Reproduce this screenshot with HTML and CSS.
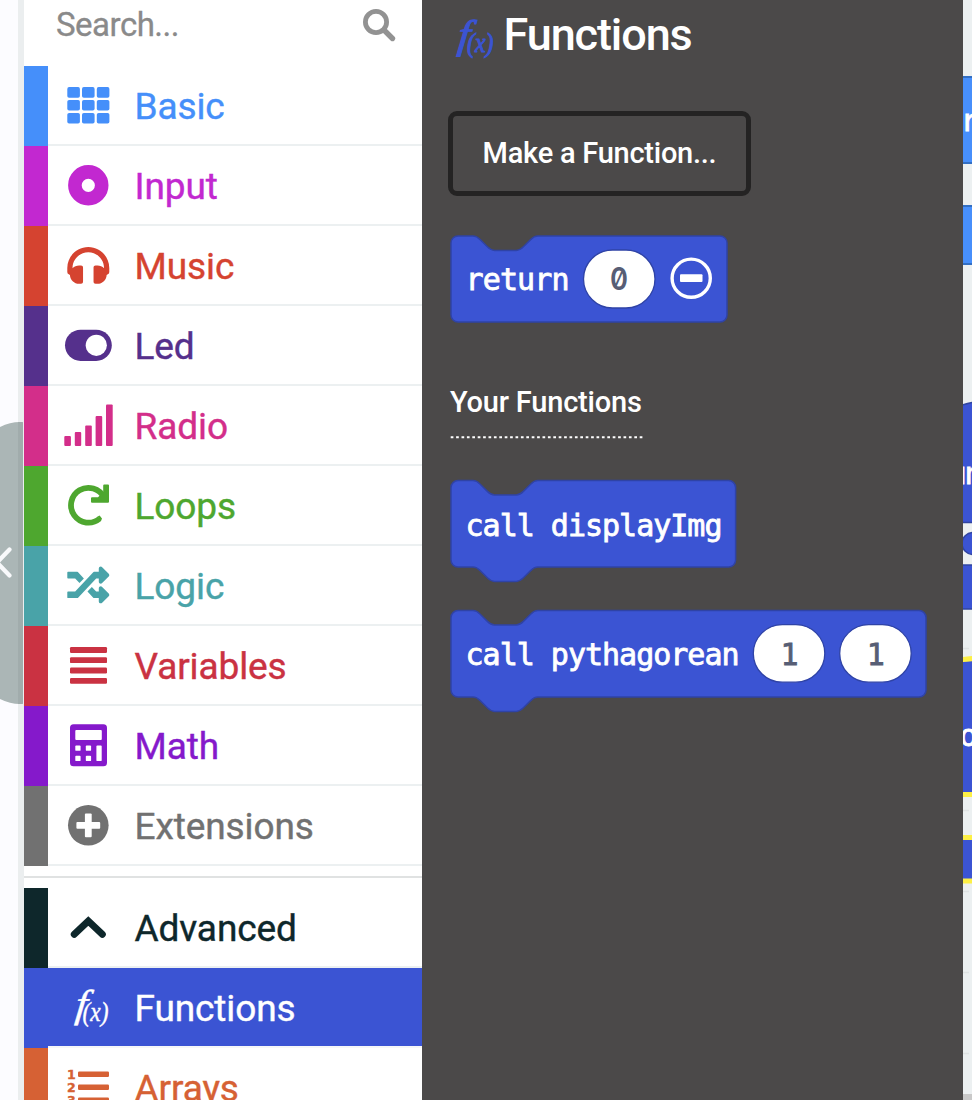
FILE: index.html
```html
<!DOCTYPE html>
<html lang="en">
<head>
<meta charset="utf-8">
<title>Functions</title>
<link rel="stylesheet" href="styles.css">
</head>
<body>
<div class="editor">
  <aside class="simulator">
    <svg class="collapse" width="24" height="284" viewBox="0 421 24 284"><path class="tab" d="M0 427Q10 422 20 422H22Q23 422 23 423V703Q23 704 22 704H20Q10 704 0 699Z"/><path class="tab-edge" d="M18 422H22Q23 422 23 423V703Q23 704 22 704H18Z"/><path class="tab-arrow" d="M9.5 549.5L-3 562.5L9.5 575.5"/></svg>
  </aside>
  <nav class="toolbox">
    <div class="search"><span>Search...</span>
      <svg width="34" height="34" viewBox="362 8 34 34"><circle cx="376" cy="22" r="10.6" fill="none" stroke="currentColor" stroke-width="4.8"/><path d="M384 30L392.5 38.5" stroke="currentColor" stroke-width="5.4" stroke-linecap="round"/></svg>
    </div>
    <div class="row basic"><svg class="icon" viewBox="64 15 48 48"><g><rect x="67.3" y="21.1" width="12.6" height="10.6" rx="1.8"/><rect x="82" y="21.1" width="12.6" height="10.6" rx="1.8"/><rect x="96.8" y="21.1" width="12.6" height="10.6" rx="1.8"/><rect x="67.3" y="34" width="12.6" height="10.6" rx="1.8"/><rect x="82" y="34" width="12.6" height="10.6" rx="1.8"/><rect x="96.8" y="34" width="12.6" height="10.6" rx="1.8"/><rect x="67.3" y="47" width="12.6" height="10.6" rx="1.8"/><rect x="82" y="47" width="12.6" height="10.6" rx="1.8"/><rect x="96.8" y="47" width="12.6" height="10.6" rx="1.8"/></g></svg><span>Basic</span></div>
    <div class="row input"><svg class="icon" viewBox="64 15 48 48"><circle cx="88.3" cy="39.3" r="13.4" fill="none" stroke="currentColor" stroke-width="13.6"/></svg><span>Input</span></div>
    <div class="row music"><svg class="icon" viewBox="64 15 48 48"><path transform="translate(67.3 18.4) scale(.082)" d="M256 32C114.52 32 0 146.497 0 288v48a32 32 0 0 0 17.689 28.622l14.383 7.191C34.083 431.903 83.421 480 144 480h24c13.255 0 24-10.745 24-24V280c0-13.255-10.745-24-24-24h-24c-31.342 0-59.671 12.879-80 33.627V288c0-105.869 86.131-192 192-192s192 86.131 192 192v1.627C427.671 268.879 399.342 256 368 256h-24c-13.255 0-24 10.745-24 24v176c0 13.255 10.745 24 24 24h24c60.579 0 109.917-48.098 111.928-108.187l14.382-7.191A32 32 0 0 0 512 336v-48c0-141.479-114.497-256-256-256z"/></svg><span>Music</span></div>
    <div class="row led"><svg class="icon" viewBox="64 15 48 48"><rect x="65" y="23.7" width="46.8" height="31.2" rx="15.6"/><circle cx="96.3" cy="39.3" r="10.6" fill="#fff"/></svg><span>Led</span></div>
    <div class="row radio"><svg class="icon" viewBox="64 15 48 48"><rect x="64.3" y="50" width="6.6" height="10" rx="1"/><rect x="74.8" y="46" width="6.4" height="14" rx="1"/><rect x="85.2" y="39.4" width="6.6" height="20.6" rx="1"/><rect x="95.6" y="30" width="6.6" height="30" rx="1"/><rect x="106" y="18.4" width="6.7" height="41.6" rx="1"/></svg><span>Radio</span></div>
    <div class="row loops"><svg class="icon" viewBox="64 15 48 48"><path d="M104 31.5A17.4 17.4 0 1 0 99.6 52.6" fill="none" stroke="currentColor" stroke-width="5.8"/><path d="M103.2 19.4Q103.2 18.4 104.2 18.4H108Q109 18.4 109 19.4V35.7Q109 36.7 108 36.7H92Q91 36.7 91 35.7V32.3Q91 31.3 92 31.3H98L103.2 26Z"/><path d="M97.6 50.6L99.6 49.5L102 52.5Q102 53.5 100.2 55Z"/></svg><span>Loops</span></div>
    <div class="row logic"><svg class="icon" viewBox="64 15 48 48"><path transform="translate(67.3 18) scale(.082)" d="M504.971 359.029c9.373 9.373 9.373 24.569 0 33.941l-80 79.984c-15.01 15.01-40.971 4.49-40.971-16.971V416h-58.785a12.004 12.004 0 0 1-8.773-3.812l-70.556-75.596 53.333-57.143L352 336h32v-39.981c0-21.438 25.943-31.998 40.971-16.971l80 79.981zM12 176h84l52.781 56.551 53.333-57.143-70.556-75.596A11.999 11.999 0 0 0 122.785 96H12c-6.627 0-12 5.373-12 12v56c0 6.627 5.373 12 12 12zm372 0v39.984c0 21.46 25.961 31.98 40.971 16.971l80-79.984c9.373-9.373 9.373-24.569 0-33.941l-80-79.981C409.943 24.021 384 34.582 384 56.019V96h-58.785a12.004 12.004 0 0 0-8.773 3.812L96 336H12c-6.627 0-12 5.373-12 12v56c0 6.627 5.373 12 12 12h110.785c3.326 0 6.503-1.381 8.773-3.812L352 176h32z"/></svg><span>Logic</span></div>
    <div class="row variables"><svg class="icon" viewBox="64 15 48 48"><rect x="70" y="21" width="37" height="5.9" rx="1.2"/><rect x="70" y="31.2" width="37" height="5.9" rx="1.2"/><rect x="70" y="41.6" width="37" height="5.9" rx="1.2"/><rect x="70" y="51.9" width="37" height="5.9" rx="1.2"/></svg><span>Variables</span></div>
    <div class="row math"><svg class="icon" viewBox="64 15 48 48"><rect x="70" y="18.2" width="37" height="42.1" rx="3.6"/><g fill="#fff"><rect x="75.3" y="24" width="26.5" height="10" rx=".9"/><rect x="75.3" y="39.5" width="5.3" height="5.3" rx=".9"/><rect x="85.8" y="39.5" width="5.3" height="5.3" rx=".9"/><rect x="75.3" y="49.8" width="5.3" height="5.3" rx=".9"/><rect x="85.8" y="49.8" width="5.3" height="5.3" rx=".9"/><rect x="96.4" y="39.5" width="5.3" height="15.6" rx=".9"/></g></svg><span>Math</span></div>
    <div class="row extensions"><svg class="icon" viewBox="64 15 48 48"><circle cx="88.3" cy="39.3" r="20.3"/><g fill="#fff"><rect x="76.4" y="35.9" width="23.8" height="6.8" rx="1"/><rect x="84.9" y="27.4" width="6.8" height="23.8" rx="1"/></g></svg><span>Extensions</span></div>
    <div class="divider"></div>
    <div class="row advanced"><svg class="icon" viewBox="64 15 48 48"><path d="M74.3 46.3L88.3 33L102.3 46.3" fill="none" stroke="currentColor" stroke-width="7" stroke-linecap="round"/></svg><span>Advanced</span></div>
    <div class="row functions selected"><svg class="icon fx" viewBox="64 15 48 48"><text transform="translate(74.5 48.8) skewX(-6) scale(1.1 1)" font-size="39">f</text><text x="82.5" y="53" font-size="27" textLength="26" lengthAdjust="spacingAndGlyphs">(x)</text></svg><span>Functions</span></div>
    <div class="row arrays"><svg class="icon" viewBox="64 15 48 48"><g class="digits"><text x="67" y="31.2">1</text><text x="67" y="44.3">2</text><text x="67" y="57.4">3</text></g><rect x="78" y="23.4" width="31" height="5.6" rx="1.2"/><rect x="78" y="36.4" width="31" height="5.6" rx="1.2"/><rect x="78" y="49.4" width="31" height="5.6" rx="1.2"/></svg><span>Arrays</span></div>
  </nav>
  <main class="flyout">
    <header class="heading"><svg class="fx" width="44" height="46" viewBox="450 15 44 46"><text transform="translate(457 47.5) skewX(-6) scale(1.1 1)" font-size="40">f</text><text x="467" y="52" font-size="27" textLength="26.5" lengthAdjust="spacingAndGlyphs">(x)</text></svg><h1>Functions</h1></header>
    <button class="make">Make a Function...</button>
    <svg class="block return" width="280" height="90" viewBox="449 234 280 90">
      <path class="shape" d="M458 236H473c3.6 0 5.4 1.8 7.2 3.6l7.2 7.2c1.8 1.8 3.6 3.6 7.2 3.6h21.6c3.6 0 5.4-1.8 7.2-3.6l7.2-7.2c1.8-1.8 3.6-3.6 7.2-3.6H720a7 7 0 0 1 7 7V315a7 7 0 0 1-7 7H458a7 7 0 0 1-7-7V243a7 7 0 0 1 7-7Z"/>
      <text class="code" x="465.5" y="290.3" textLength="104">return</text>
      <rect class="pill" x="583.5" y="250" width="71.5" height="58" rx="29"/>
      <text class="zero" transform="translate(619 290.3) scale(.88 1)" text-anchor="middle">0</text>
      <circle cx="691.2" cy="278.2" r="19.1" fill="none" stroke="#fff" stroke-width="3.4"/><rect x="680" y="274.2" width="22.5" height="7.8" rx="1" fill="#fff"/>
    </svg>
    <h2>Your Functions</h2>
    <svg class="dots" width="194" height="4" viewBox="450 435 194 4"><path d="M450.7 437.2H642.6" stroke="#fff" stroke-width="2" stroke-dasharray="2.7 2.7"/></svg>
    <svg class="block call" width="290" height="106" viewBox="449 479 290 106">
      <path class="shape" d="M458 480.6H473c3.6 0 5.4 1.8 7.2 3.6l7.2 7.2c1.8 1.8 3.6 3.6 7.2 3.6h21.6c3.6 0 5.4-1.8 7.2-3.6l7.2-7.2c1.8-1.8 3.6-3.6 7.2-3.6H728.6a7 7 0 0 1 7 7V560a7 7 0 0 1-7 7H537.8c-3.6 0-5.4 1.8-7.2 3.6l-7.2 7.2c-1.8 1.8-3.6 3.6-7.2 3.6h-21.6c-3.6 0-5.4-1.8-7.2-3.6l-7.2-7.2c-1.8-1.8-3.6-3.6-7.2-3.6H458a7 7 0 0 1-7-7V487.6a7 7 0 0 1 7-7Z"/>
      <text class="code" x="465.5" y="535.7" textLength="257">call displayImg</text>
    </svg>
    <svg class="block" width="480" height="106" viewBox="449 609 480 106">
      <path class="shape" d="M458 610.6H473c3.6 0 5.4 1.8 7.2 3.6l7.2 7.2c1.8 1.8 3.6 3.6 7.2 3.6h21.6c3.6 0 5.4-1.8 7.2-3.6l7.2-7.2c1.8-1.8 3.6-3.6 7.2-3.6H919a7 7 0 0 1 7 7V690a7 7 0 0 1-7 7H537.8c-3.6 0-5.4 1.8-7.2 3.6l-7.2 7.2c-1.8 1.8-3.6 3.6-7.2 3.6h-21.6c-3.6 0-5.4-1.8-7.2-3.6l-7.2-7.2c-1.8-1.8-3.6-3.6-7.2-3.6H458a7 7 0 0 1-7-7V617.6a7 7 0 0 1 7-7Z"/>
      <text class="code" x="465.5" y="665.3" textLength="274">call pythagorean</text>
      <rect class="pill" x="753.3" y="624.7" width="71.5" height="57.5" rx="29"/><rect class="pill" x="839.7" y="624.7" width="71.5" height="57.5" rx="29"/>
      <text class="code num" x="789.5" y="665.3" text-anchor="middle">1</text><text class="code num" x="875.7" y="665.3" text-anchor="middle">1</text>
    </svg>
  </main>
  <svg class="workspace" width="9" height="1100" viewBox="963 0 9 1100">
    <path d="M963 648.5h6M963 810.5h6M963 891.5h6M963 972.5h6M963 1053.5h6" stroke="#dfe3e4" stroke-width="1.5"/>
    <g fill="#478ffb" stroke="#326fc4" stroke-width="2"><rect x="950" y="77" width="40" height="86"/><rect x="950" y="206" width="40" height="58"/></g>
    <g fill="#3b54d3" stroke="#3045a0" stroke-width="1.5"><path d="M950 522.5V411Q960 404 980 401V522.5Z"/><circle cx="973" cy="543.5" r="11"/><rect x="950" y="565" width="40" height="44"/></g>
    <path d="M950 660Q963 660 980 656V794H950ZM950 837H980V881H950Z" fill="#3b54d3"/>
    <path d="M960 659.5Q967 659.5 980 657.5M960 794.5H980M960 837.5H980M960 881H980" fill="none" stroke="#fdf046" stroke-width="5"/>
    <text class="code" x="960.5" y="131">r</text><text class="code" x="948.5" y="484" textLength="34">un</text><text class="code" x="959.5" y="746">o</text>
    <rect x="963" y="1094" width="9" height="6" fill="#c9c9c9"/>
  </svg>
</div>
</body>
</html>
```
FILE: styles.css
```css
* { box-sizing: border-box; }
body { margin: 0; font-family: Roboto, "Liberation Sans", sans-serif; background: #ecf0f1; }
.editor { display: flex; width: 972px; height: 1100px; overflow: hidden; }
svg { display: block; flex: none; overflow: visible; }
.simulator { width: 24px; flex: none; padding-top: 421px; background: linear-gradient(90deg, #fcfcff 18px, #ebeeef 18px); overflow: hidden; }
.tab { fill: #abb6b6; }
.tab-edge { fill: #a1acac; }
.tab-arrow { fill: none; stroke: #f8f9fb; stroke-width: 4.2; stroke-linecap: round; }

.toolbox { width: 398px; flex: none; background: #fff; }
.search { height: 66px; display: flex; justify-content: space-between; align-items: flex-start; padding: 5px 26px 0 32px; color: #8a8a8a; font-size: 33px; line-height: 40px; letter-spacing: -.5px; -webkit-text-stroke: .3px currentColor; }
.search svg { margin-top: 3px; color: #929292; }
.row { height: 80px; display: flex; align-items: center; padding: 0 0 2px 16px; border-left: 24px solid var(--c); color: var(--c); font-size: 37px; line-height: 42px; background: linear-gradient(#ecf0f1, #ecf0f1) bottom / 100% 2px no-repeat #fff; }
.row span { margin: 3px 0 0 22.5px; letter-spacing: -.1px; -webkit-text-stroke: .4px currentColor; }
.icon { width: 48px; height: 48px; fill: currentColor; }
.basic { --c: #458ffa; }
.input { --c: #c228d0; }
.music { --c: #d54330; }
.led { --c: #55308c; }
.radio { --c: #d32e8a; }
.loops { --c: #4ea72f; }
.logic { --c: #49a3a8; }
.variables { --c: #ca3242; }
.math { --c: #8519cb; }
.extensions { --c: #717171; }
.advanced { --c: #0e272b; }
.functions { --c: #3b54d3; }
.arrays { --c: #d66134; }
.selected { color: #fff; background: linear-gradient(var(--c) 78px, #f5f7f8 78px); }
.divider { height: 22px; padding-top: 10px; }
.divider::before { content: ""; display: block; height: 2px; background: #e0e2e2; }
.fx { font-family: "Liberation Serif", serif; font-style: italic; stroke: currentColor; stroke-width: .4px; fill: currentColor; }
.digits { font: bold 12.5px "DejaVu Sans", sans-serif; stroke: currentColor; stroke-width: .4px; }

.flyout { width: 541px; flex: none; padding: 15px 0 0 28px; background: #4b4949; color: #fff; }
.heading { display: flex; height: 46px; color: #3b54d3; }
.heading .fx { stroke-width: 1px; }
h1 { margin: -6px 0 0 9.5px; color: #fff; font-size: 45px; line-height: 52px; font-weight: 500; letter-spacing: -1.1px; }
.make { display: block; width: 303px; height: 85px; margin: 50px 0 0 -2px; padding: 0 0 1px; border: 5px solid #242323; border-radius: 9px; background: none; color: #fff; font: 500 29px/40px Roboto, sans-serif; letter-spacing: -.25px; }
.block { margin-left: -1px; }
.return { margin-top: 38px; }
h2 { margin: 60px 0 0; font-size: 29px; line-height: 36px; font-weight: 500; letter-spacing: -.2px; }
.dots { margin-top: 15px; }
.call { margin-top: 40px; margin-bottom: 24px; }
.shape { fill: #3b54d3; stroke: #2f43a6; stroke-width: 1.5; }
.pill { fill: #fff; stroke: #2f43a6; stroke-width: 1.3; }
.code { font-family: "DejaVu Sans Mono", monospace; font-size: 30px; fill: #fff; stroke: #fff; stroke-width: .8px; }
.num { fill: #575e75; stroke: #575e75; }
.zero { font: 600 31px Inter, sans-serif; font-feature-settings: "zero"; fill: #575e75; }
.workspace { background: #ecf0f1; overflow: hidden; }
```
